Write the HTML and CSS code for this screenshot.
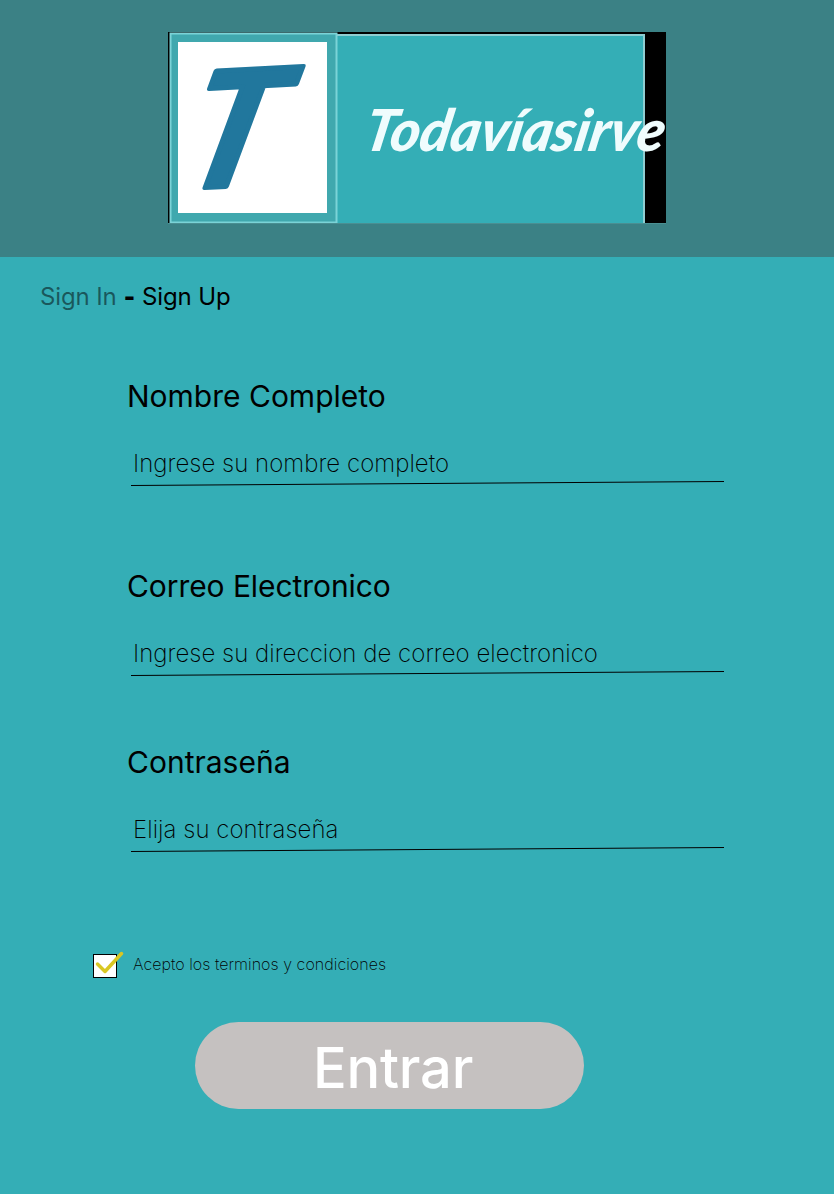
FILE: index.html
```html
<!DOCTYPE html>
<html lang="es">
<head>
<meta charset="utf-8">
<title>Todavíasirve - Sign Up</title>
<link rel="stylesheet" href="styles.css">
</head>
<body>
<header class="header">
  <svg class="logo" viewBox="0 0 498 192" role="img" aria-label="Todavíasirve">
    <rect width="498" height="191.5" fill="#000"/>
    <rect x="168" y="2" width="309" height="189" fill="#34aeb6"/>
    <path d="M168 3H476V191" fill="none" stroke="#8fcdd1" stroke-width="2"/>
    <rect x="2.5" y="1.5" width="166" height="189" fill="#40a8ae" stroke="#7bd3d7" stroke-width="2"/>
    <rect x="10" y="10" width="149" height="171" fill="#fff"/>
    <text class="monogram" transform="translate(8 157) rotate(-3) skewX(-17)" textLength="92" lengthAdjust="spacingAndGlyphs">T</text>
    <text class="wordmark" transform="translate(194 119) skewX(-11)" textLength="300" lengthAdjust="spacingAndGlyphs">Todavíasirve</text>
    <path d="M0 191.5H498" stroke="#4a8f92"/>
  </svg>
</header>
<main class="content">
  <nav class="tabs"><a class="tab-muted">Sign In</a><b class="dash">-</b><a>Sign Up</a></nav>
  <form class="form">
    <div class="field">
      <label class="label">Nombre Completo</label>
      <div class="hint">Ingrese su nombre completo</div>
      <svg class="rule" viewBox="0 0 593 6"><path d="M0 4.5L593 0.5"/></svg>
    </div>
    <div class="field">
      <label class="label label-tight">Correo Electronico</label>
      <div class="hint">Ingrese su direccion de correo electronico</div>
      <svg class="rule" viewBox="0 0 593 6"><path d="M0 4.5L593 0.5"/></svg>
    </div>
    <div class="field field-last">
      <label class="label">Contraseña</label>
      <div class="hint">Elija su contraseña</div>
      <svg class="rule" viewBox="0 0 593 6"><path d="M0 4.5L593 0.5"/></svg>
    </div>
  </form>
  <div class="terms">
    <span class="checkbox"><svg class="check" viewBox="0 0 32 28"><path d="M5.5 14L13 21.5L29.5 3.5"/></svg></span>
    <span class="terms-text">Acepto los terminos y condiciones</span>
  </div>
  <button class="submit" type="button">Entrar</button>
</main>
</body>
</html>
```

FILE: styles.css
```css
* { box-sizing: border-box; }
body {
  margin: 0;
  height: 1194px;
  overflow: hidden;
  background: #34aeb6;
  color: #000;
  font-family: Inter, sans-serif;
}
.header { height: 257px; padding: 32px 0 0 168px; background: #3b8185; }
.logo { display: block; width: 498px; height: 192px; overflow: visible; filter: blur(0.5px); }
.monogram {
  font: italic 700 160px Lato, sans-serif;
  fill: #21779d;
  stroke: #21779d;
  stroke-width: 5px;
  stroke-linejoin: round;
}
.wordmark { font: italic 900 58px Lato, sans-serif; fill: #effcfd; }
.content { display: flex; flex-direction: column; }
.tabs {
  display: flex;
  gap: 7px;
  margin: 25px 0 0 40px;
  height: 30px;
  font-size: 24px;
  letter-spacing: -0.12px;
  line-height: 30px;
}
.tab-muted { color: rgba(0, 0, 0, 0.5); }
.dash { font-weight: 900; }
.form { display: flex; flex-direction: column; margin: 66px 0 0 127px; }
.field { height: 190px; }
.field:nth-child(2) { height: 176px; }
.field-last { height: 130px; }
.label { display: block; height: 36px; font-size: 30px; line-height: 36px; }
.label-tight { letter-spacing: -0.07px; }
.hint {
  height: 30px;
  margin: 35px 0 0 6px;
  font-size: 24px;
  font-weight: 200;
  letter-spacing: 0.04px;
  line-height: 30px;
}
.rule { display: block; width: 593px; height: 6px; margin: 2px 0 0 4px; stroke: #000; overflow: visible; }
.terms { display: flex; gap: 16px; margin: 80px 0 0 93px; height: 24px; }
.checkbox { position: relative; width: 24px; height: 24px; border: 1px solid #000; background: #fff; }
.check {
  position: absolute;
  left: -2px;
  top: -5px;
  width: 32px;
  height: 28px;
  fill: none;
  stroke: #d9c723;
  stroke-width: 3.5;
  stroke-linecap: round;
  stroke-linejoin: round;
}
.terms-text { font-size: 16px; font-weight: 200; letter-spacing: 0.05px; line-height: 20px; }
.submit {
  width: 389px;
  height: 87px;
  margin: 44px 0 0 195px;
  padding: 5px 0 0 7px;
  border: 0;
  border-radius: 44px;
  background: #c5c1c0;
  color: #fff;
  font: 500 56px/82px Inter, sans-serif;
  letter-spacing: -0.2px;
}
```
